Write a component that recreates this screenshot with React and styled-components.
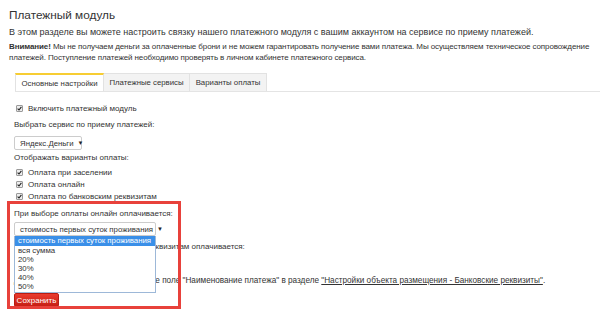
import React from "react";
import styled, { createGlobalStyle } from "styled-components";

const Global = createGlobalStyle`
  html, body { margin: 0; padding: 0; background: #fff; }
  body { font-family: "Liberation Sans", Arial, sans-serif; color: #333; }
  * { box-sizing: border-box; }
`;

const Page = styled.div`
  position: relative;
  width: 600px;
  height: 317px;
  overflow: hidden;
  padding: 8px 0 0 9px;
  font-size: 8px;
  line-height: 11px;
`;

const Title = styled.h1`
  margin: 0 0 4px;
  font-size: 11.8px;
  line-height: 15px;
  font-weight: normal;
  color: #333;
`;

const Para = styled.p`
  margin: 0 0 ${(p) => p.$mb || 3}px;
  font-size: ${(p) => p.$fs || 8}px;
  letter-spacing: ${(p) => p.$ls || 0}px;
  line-height: 11px;
`;

const Tabs = styled.div`
  display: flex;
  margin: 0 -9px 0 6px;
  border-bottom: 1px solid #e4e4e4;
`;

const Tab = styled.div`
  width: ${(p) => p.$w}px;
  height: 18px;
  display: flex;
  align-items: center;
  justify-content: center;
  font-size: 7.8px;
  white-space: nowrap;
  background: ${(p) => (p.$active ? "#fff" : "#f3f3f3")};
  border: 1px solid #e2e2e2;
  border-bottom: none;
  border-top: ${(p) => (p.$active ? "2px solid #f7cd32" : "1px solid #e2e2e2")};
  margin-bottom: ${(p) => (p.$active ? "-1px" : "0")};
  & + & { border-left: none; }
`;

const Body = styled.div`
  padding: 10px 0 0 5px;
`;

const CheckRow = styled.label`
  display: flex;
  align-items: center;
  gap: 5px;
  height: 12px;
  padding-left: 2px;
  white-space: nowrap;
  margin-top: ${(p) => p.$mt || 0}px;
`;

const Box = styled.span`
  width: 7px;
  height: 7px;
  border: 1px solid #9a9a9a;
  border-radius: 1px;
  background: #ededed;
  display: flex;
  align-items: center;
  justify-content: center;
`;

const Check = () => (
  <Box>
    <svg width="5" height="5" viewBox="0 0 5 5">
      <path d="M0.6 2.6 L2 4 L4.4 0.8" fill="none" stroke="#222" strokeWidth="1.1" />
    </svg>
  </Box>
);

const Label = styled.div`
  margin-top: ${(p) => p.$mt || 0}px;
  height: 12px;
  line-height: 12px;
  white-space: nowrap;
  font-size: ${(p) => p.$fs || 8}px;
`;

const Select = styled.div`
  width: ${(p) => p.$w}px;
  height: 14px;
  border: 1px solid #ccc;
  border-radius: 2px;
  display: flex;
  align-items: center;
  justify-content: space-between;
  gap: 4px;
  padding: 0 4px 0 5px;
  font-size: 7.8px;
  white-space: nowrap;
  background: #fff;
  margin-top: ${(p) => p.$mt || 0}px;
`;

const Arrow = styled.span`
  font-size: 6px;
  color: #222;
`;

const Relative = styled.div`
  position: relative;
  margin-top: 2px;
`;

const Options = styled.div`
  position: absolute;
  left: 0;
  top: 14px;
  width: 142px;
  background: #fff;
  border: 1px solid #9db8d8;
  border-top: none;
  font-size: 7.8px;
  z-index: 2;
  padding-bottom: 1px;
  white-space: nowrap;
`;

const Option = styled.div`
  padding: 0 3px;
  height: ${(p) => (p.$sel ? 10 : 9)}px;
  line-height: ${(p) => (p.$sel ? 10 : 9)}px;
  background: ${(p) => (p.$sel ? "#3a8fe8" : "transparent")};
  color: ${(p) => (p.$sel ? "#fff" : "#333")};
`;

const Link = styled.a`
  color: #333;
  text-decoration: underline;
`;

const SaveButton = styled.button`
  font-family: "Liberation Sans", Arial, sans-serif;
  font-size: 8px;
  color: #fff;
  background: linear-gradient(#ea3b2e, #c61f14);
  border: 1px solid #b81c12;
  border-radius: 2px;
  height: 14px;
  width: 45px;
  padding: 0;
  margin-top: 6px;
  display: flex;
  align-items: center;
  justify-content: center;
`;

const Highlight = styled.div`
  position: absolute;
  left: 7px;
  top: 201px;
  width: 174px;
  height: 108px;
  border: 3px solid #e8413b;
  z-index: 3;
  pointer-events: none;
`;

export default function App() {
  return (
    <>
      <Global />
      <Page>
        <Title>Платежный модуль</Title>
        <Para $mb={3} $fs={9}>
          В этом разделе вы можете настроить связку нашего платежного модуля с вашим аккаунтом на сервисе по приему платежей.
        </Para>
        <Para $mb={10} $fs={8} $ls={-0.1}>
          <b>Внимание!</b> Мы не получаем деньги за оплаченные брони и не можем гарантировать получение вами платежа. Мы осуществляем техническое сопровождение платежей. Поступление платежей необходимо проверять в личном кабинете платежного сервиса.
        </Para>
        <Tabs>
          <Tab $w={89} $active>Основные настройки</Tab>
          <Tab $w={86}>Платежные сервисы</Tab>
          <Tab $w={77}>Варианты оплаты</Tab>
        </Tabs>
        <Body>
          <CheckRow><Check />Включить платежный модуль</CheckRow>
          <Label $mt={5}>Выбрать сервис по приему платежей:</Label>
          <Select $w={68} $mt={5}>Яндекс.Деньги <Arrow>▼</Arrow></Select>
          <Label $mt={2}>Отображать варианты оплаты:</Label>
          <CheckRow $mt={2}><Check />Оплата при заселении</CheckRow>
          <CheckRow><Check />Оплата онлайн</CheckRow>
          <CheckRow><Check />Оплата по банковским реквизитам</CheckRow>
          <Label $mt={6}>При выборе оплаты онлайн оплачивается:</Label>
          <Relative>
            <Select $w={142}>стоимость первых суток проживания <Arrow>▼</Arrow></Select>
            <Options>
              <Option $sel>стоимость первых суток проживания</Option>
              <Option>вся сумма</Option>
              <Option>20%</Option>
              <Option>30%</Option>
              <Option>40%</Option>
              <Option>50%</Option>
            </Options>
          </Relative>
          <Label $mt={5}>При выборе оплаты по банковским реквизитам оплачивается:</Label>
          <Select $w={142} $mt={2}>вся сумма <Arrow>▼</Arrow></Select>
          <Label $mt={6} $fs={8.2}>
            Для оплаты по реквизитам, заполните поле "Наименование платежа" в разделе <Link>"Настройки объекта размещения - Банковские реквизиты"</Link>.
          </Label>
          <SaveButton>Сохранить</SaveButton>
        </Body>
        <Highlight />
      </Page>
    </>
  );
}
